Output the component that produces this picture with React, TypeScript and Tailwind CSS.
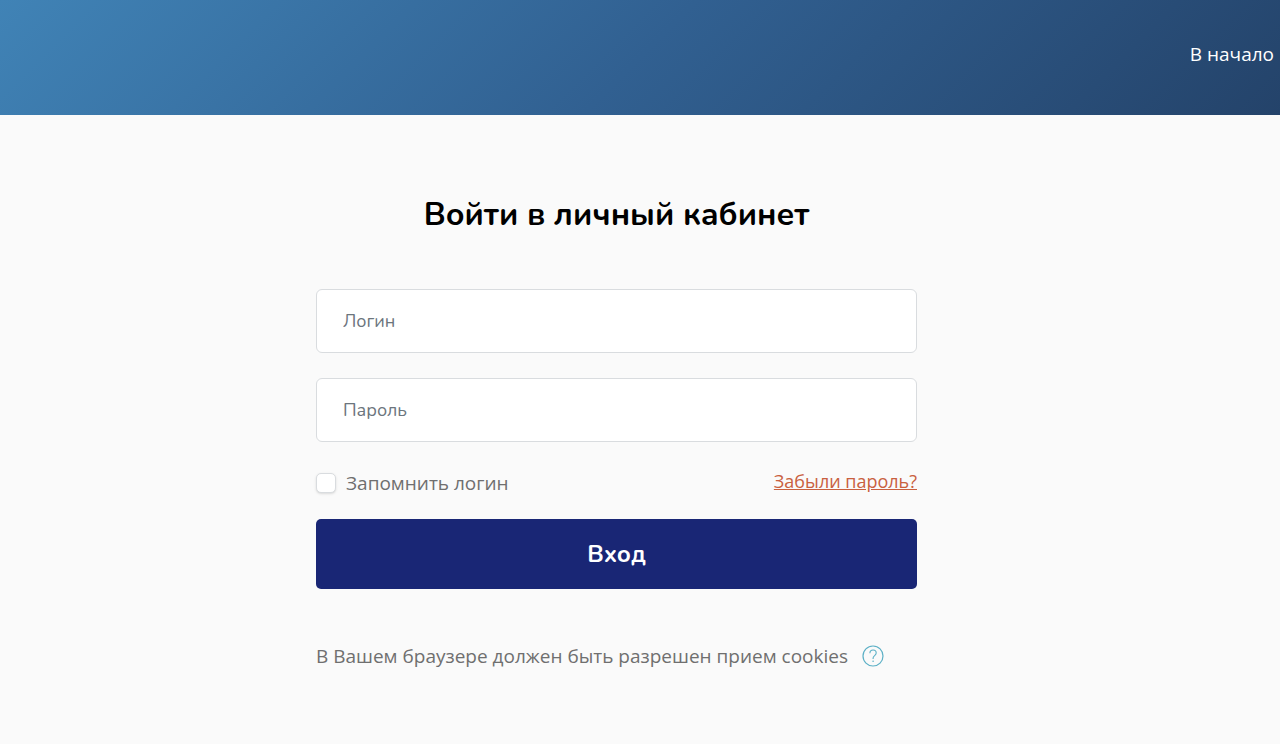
import React, { useState } from "react";

const Header = () => (
  <header className="flex h-[115px] items-center justify-end bg-linear-[135deg,#4083b6_0%,#316091_50%,#24436a_100%] px-1.5 pb-2">
    <a href="#" className="text-[19px] leading-[30px] text-white">
      В начало
    </a>
  </header>
);

const HelpIcon = () => (
  <svg width="22" height="22" viewBox="0 0 22 22" fill="none" stroke="#5cb0c6">
    <circle cx="11" cy="11" r="10" strokeWidth="1.2" />
    <path
      d="M7.9 8.2C7.9 6.2 9.2 5 11.1 5s3.1 1.2 3.1 3c0 2.4-3.1 2.7-3.1 5v1"
      strokeWidth="1.1"
    />
    <circle cx="11.1" cy="16.2" r="0.8" fill="#5cb0c6" stroke="none" />
  </svg>
);

const inputStyle =
  "h-16 w-full rounded-md border border-[#d9dcdf] bg-white px-[26px] font-['Nunito','Open_Sans',sans-serif] text-[18px] text-[#495057] placeholder:text-[#6c757d]";

export default function App() {
  const [remember, setRemember] = useState(false);

  return (
    <div className="min-h-screen bg-[#fafafa] font-['Open_Sans',sans-serif] text-[#6f6f6f]">
      <Header />
      <main className="ml-[316px] max-w-[601px] pt-[76px]">
        <h1 className="text-center font-['Nunito','Open_Sans',sans-serif] text-[32px] leading-[48px] font-bold text-black">
          Войти в личный кабинет
        </h1>
        <form className="mt-[50px]" onSubmit={(e) => e.preventDefault()}>
          <input
            type="text"
            aria-label="Логин"
            placeholder="Логин"
            className={inputStyle}
          />
          <input
            type="password"
            aria-label="Пароль"
            placeholder="Пароль"
            className={`${inputStyle} mt-[25px]`}
          />
          <div className="mt-[26px] flex items-start justify-between">
            <label className="flex items-center gap-2.5 text-[19px] leading-[30px]">
              <input
                type="checkbox"
                checked={remember}
                onChange={(e) => setRemember(e.target.checked)}
                className="h-5 w-5 appearance-none rounded-[5px] border border-[#d9dcdf] bg-white shadow-sm checked:bg-[#192675]"
              />
              Запомнить логин
            </label>
            <a
              href="#"
              className="text-[18px] leading-[27px] text-[#c9603f] underline"
            >
              Забыли пароль?
            </a>
          </div>
          <button
            type="submit"
            className="mt-[21px] h-[70px] w-full rounded-[5px] bg-[#192675] font-['Nunito','Open_Sans',sans-serif] text-[24px] font-bold text-white"
          >
            Вход
          </button>
        </form>
        <div className="mt-[52px] flex items-center gap-3.5 text-[19px] leading-[30px]">
          <p>В Вашем браузере должен быть разрешен прием cookies</p>
          <button type="button" aria-label="Помощь">
            <HelpIcon />
          </button>
        </div>
      </main>
    </div>
  );
}
